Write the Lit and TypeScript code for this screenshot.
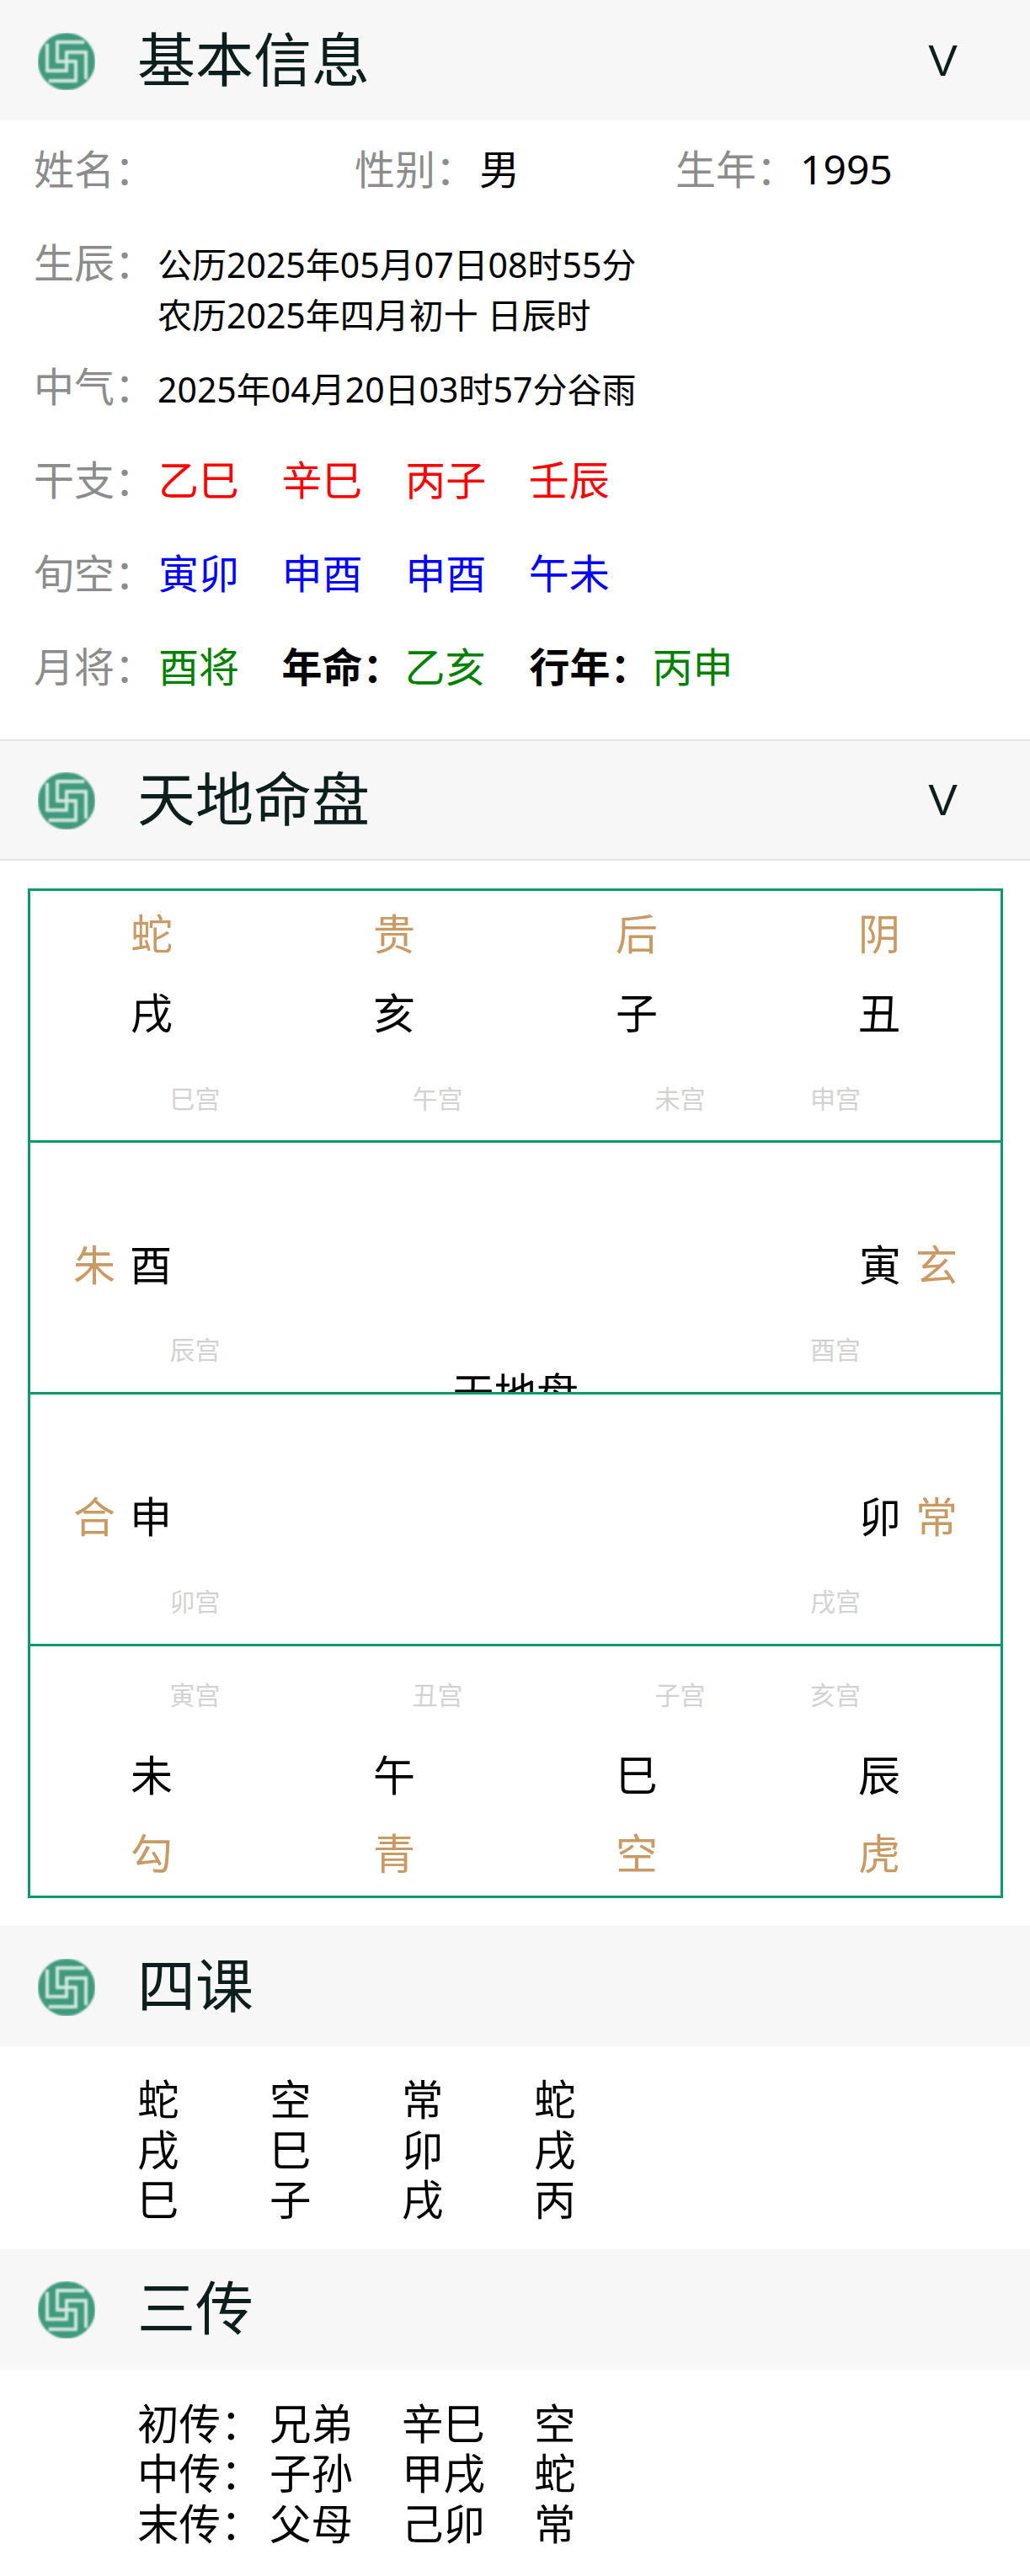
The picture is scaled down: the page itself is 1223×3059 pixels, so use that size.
import { LitElement, html, css, svg } from "lit";
import { customElement } from "lit/decorators.js";

const logo = html`<svg class="logo" viewBox="0 0 68 68" aria-hidden="true">
  <g filter="url(#soft)">
    <circle cx="34" cy="34" r="34" fill="#3f9a7e"></circle>
    ${[0, 90, 180, 270].map(
      (r) => svg`<g transform="rotate(${r} 34 34)" fill="none" stroke="#d2efe4" stroke-width="3.4">
        <path d="M55 11H23V34H34"></path>
      </g>`
    )}
  </g>
  <defs><filter id="soft"><feGaussianBlur stdDeviation="0.9"></feGaussianBlur></filter></defs>
</svg>`;

type Cell = { god?: string; zhi?: string; gong?: string };
const top: Cell[] = [
  { god: "蛇", zhi: "戌", gong: "巳宫" },
  { god: "贵", zhi: "亥", gong: "午宫" },
  { god: "后", zhi: "子", gong: "未宫" },
  { god: "阴", zhi: "丑", gong: "申宫" },
];
const bottom: Cell[] = [
  { god: "勾", zhi: "未", gong: "寅宫" },
  { god: "青", zhi: "午", gong: "丑宫" },
  { god: "空", zhi: "巳", gong: "子宫" },
  { god: "虎", zhi: "辰", gong: "亥宫" },
];

@customElement("app-root")
export class AppRoot extends LitElement {
  static styles = css`
    :host {
      display: block;
      width: 1223px;
      height: 3059px;
      background: #fff;
      overflow: hidden;
      font-family: "Noto Sans", "Noto Sans CJK SC", sans-serif;
      color: #000;
      font-size: 48px;
    }
    .head {
      height: 143px;
      box-sizing: border-box;
      background: #f7f7f7;
      display: flex;
      align-items: center;
      padding-left: 45px;
    }
    .head.lined {
      height: 144px;
      border-top: 2px solid #e4e4e4;
      border-bottom: 2px solid #e4e4e4;
    }
    .logo {
      width: 68px;
      height: 68px;
      flex: none;
      margin-top: 2px;
    }
    .title {
      margin-left: 50px;
      margin-bottom: 4px;
      font-size: 69px;
      line-height: 80px;
      color: #0c1f1c;
      flex: 1;
    }
    .chev {
      width: 35px;
      margin-right: 86px;
      font-family: "Liberation Sans", sans-serif;
      font-size: 52px;
      line-height: 60px;
      color: #0c1f1c;
      text-align: center;
    }
    .info {
      padding: 28px 40px 56px;
    }
    .row {
      display: flex;
      line-height: 60px;
    }
    .mt51 { margin-top: 51px; }
    .mt25 { margin-top: 25px; }
    .mt48 { margin-top: 48px; }
    .thirds > div {
      width: 381px;
      display: flex;
    }
    .label {
      color: #8c8c8c;
      width: 148px;
      flex: none;
    }
    .small {
      font-size: 41px;
      line-height: 60px;
      margin-top: 2px;
      margin-left: -1px;
    }
    .small.low { margin-top: 3px; }
    .vals {
      display: grid;
      grid-template-columns: repeat(4, 146.6px);
      white-space: nowrap;
    }
    .red { color: #f00; }
    .blue { color: #00f; }
    .green { color: #008000; }
    b { font-weight: 700; color: #000; }
    .pair { display: flex; }
    .pair b { width: 146px; }
    .wide { grid-template-columns: 146.6px 294px 294px; }

    .board {
      margin: 33px 32px 33px 33px;
      width: 1158px;
      box-sizing: border-box;
      border: 3px solid #0a9a6c;
    }
    .brow {
      display: grid;
      grid-template-columns: repeat(4, 1fr);
      height: 299px;
      box-sizing: border-box;
      border-bottom: 3px solid #0a9a6c;
      overflow: hidden;
    }
    .brow:last-child {
      height: 296px;
      border-bottom: 0;
    }
    .cell {
      text-align: center;
      line-height: 48px;
      font-size: 50px;
    }
    .god { color: #c99a64; }
    .gong {
      color: #d2d2d2;
      font-size: 30px;
      line-height: 28px;
      padding-left: 103px;
    }
    .cell:last-child .gong {
      padding-left: 0;
      padding-right: 104px;
    }
    .r1 .cell { padding-top: 27px; }
    .r1 .zhi { margin-top: 46px; }
    .r1 .gong { margin-top: 64px; }
    .r4 .cell { padding-top: 44px; }
    .r4 .zhi { margin-top: 57px; }
    .r4 .god { margin-top: 45px; }
    .side {
      display: flex;
      gap: 17px;
      line-height: 48px;
      justify-content: flex-end;
      padding-right: 120px;
    }
    .side.right {
      justify-content: flex-start;
      padding: 0 0 0 120px;
    }
    .mid .cell { padding-top: 121px; }
    .mid .gong { margin-top: 63px; }
    .centre {
      grid-column: span 2;
      text-align: center;
      padding-top: 273px;
      line-height: 48px;
      font-size: 50px;
    }
    .table {
      display: grid;
      grid-template-columns: repeat(4, 157px);
      padding-left: 163px;
      line-height: 59.5px;
      font-size: 49.5px;
      white-space: nowrap;
    }
    .ke { padding-top: 34px; padding-bottom: 28px; }
    .chuan { padding-top: 35px; }
  `;

  private cell(c: Cell, bottomRow: boolean) {
    if (bottomRow) {
      return html`<div class="cell">
        <div class="gong">${c.gong}</div>
        <div class="zhi">${c.zhi}</div>
        <div class="god">${c.god}</div>
      </div>`;
    }
    return html`<div class="cell">
      <div class="god">${c.god}</div>
      <div class="zhi">${c.zhi}</div>
      <div class="gong">${c.gong}</div>
    </div>`;
  }

  private mid(g1: string, z1: string, gong1: string, z2: string, g2: string, gong2: string, centre: boolean) {
    return html`<div class="brow mid">
      <div class="cell">
        <div class="side"><span class="god">${g1}</span><span>${z1}</span></div>
        <div class="gong">${gong1}</div>
      </div>
      <div class="centre">${centre ? "天地盘" : ""}</div>
      <div class="cell">
        <div class="side right"><span>${z2}</span><span class="god">${g2}</span></div>
        <div class="gong">${gong2}</div>
      </div>
    </div>`;
  }

  render() {
    const ke = ["蛇", "空", "常", "蛇", "戌", "巳", "卯", "戌", "巳", "子", "戌", "丙"];
    const chuan = ["初传：", "兄弟", "辛巳", "空", "中传：", "子孙", "甲戌", "蛇", "末传：", "父母", "己卯", "常"];
    return html`
      <div class="head">${logo}<div class="title">基本信息</div><div class="chev">V</div></div>
      <div class="info">
        <div class="row thirds">
          <div><span class="label">姓名：</span></div>
          <div><span class="label">性别：</span><span>男</span></div>
          <div><span class="label">生年：</span><span>1995</span></div>
        </div>
        <div class="row mt51">
          <span class="label">生辰：</span>
          <div class="small">公历2025年05月07日08时55分<br />农历2025年四月初十 日辰时</div>
        </div>
        <div class="row mt25">
          <span class="label">中气：</span>
          <div class="small low">2025年04月20日03时57分谷雨</div>
        </div>
        <div class="row mt48">
          <span class="label">干支：</span>
          <div class="vals red"><span>乙巳</span><span>辛巳</span><span>丙子</span><span>壬辰</span></div>
        </div>
        <div class="row mt51">
          <span class="label">旬空：</span>
          <div class="vals blue"><span>寅卯</span><span>申酉</span><span>申酉</span><span>午未</span></div>
        </div>
        <div class="row mt51">
          <span class="label">月将：</span>
          <div class="vals wide green">
            <span>酉将</span>
            <span class="pair"><b>年命：</b>乙亥</span>
            <span class="pair"><b>行年：</b>丙申</span>
          </div>
        </div>
      </div>

      <div class="head lined">${logo}<div class="title">天地命盘</div><div class="chev">V</div></div>
      <div class="board">
        <div class="brow r1">${top.map((c) => this.cell(c, false))}</div>
        ${this.mid("朱", "酉", "辰宫", "寅", "玄", "酉宫", true)}
        ${this.mid("合", "申", "卯宫", "卯", "常", "戌宫", false)}
        <div class="brow r4">${bottom.map((c) => this.cell(c, true))}</div>
      </div>

      <div class="head">${logo}<div class="title">四课</div></div>
      <div class="table ke">${ke.map((t) => html`<span>${t}</span>`)}</div>

      <div class="head">${logo}<div class="title">三传</div></div>
      <div class="table chuan">${chuan.map((t) => html`<span>${t}</span>`)}</div>
    `;
  }
}
